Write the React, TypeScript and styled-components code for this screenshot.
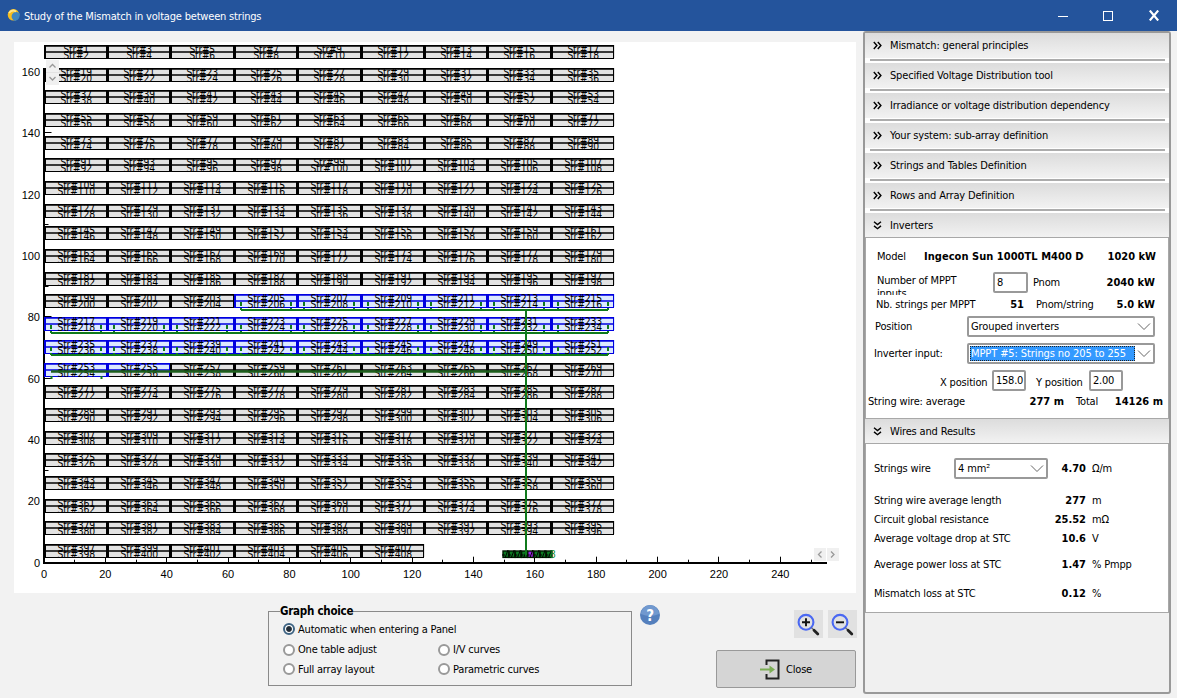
import React from 'react';
import styled, { createGlobalStyle, css } from 'styled-components';

const Global = createGlobalStyle`
  * { box-sizing: border-box; }
  body {
    margin: 0;
    background: #f2f2f2;
    font-family: "DejaVu Sans Condensed", "DejaVu Sans", sans-serif;
    font-stretch: condensed;
    font-size: 11px;
    letter-spacing: -0.2px;
    color: #000;
  }
`;

const Window = styled.div`
  width: 1177px;
  height: 698px;
  display: flex;
  flex-direction: column;
  background: #f2f2f2;
  overflow: hidden;
`;

const TitleBar = styled.header`
  height: 31px;
  flex: none;
  display: flex;
  align-items: center;
  padding: 0 17px 0 7px;
  background: #24549c;
  color: #fff;
`;

const Title = styled.h1`
  flex: 1;
  margin: 1px 0 0 3px;
  font-size: 11px;
  font-weight: 400;
  letter-spacing: -0.19px;
  white-space: nowrap;
`;

const Controls = styled.div`
  display: flex;
  align-items: center;
  gap: 35px;
`;

const Body = styled.main`
  flex: 1;
  display: flex;
  min-height: 0;
`;

const Left = styled.section`
  width: 863px;
  display: flex;
  flex-direction: column;
  padding: 11px 0 0 14px;
`;

const ChartBox = styled.div`
  width: 842px;
  height: 551px;
  background: #fff;
  svg { display: block; }
`;

const Footer = styled.div`
  display: flex;
  padding: 11px 0 0 254px;
`;

const Group = styled.fieldset`
  width: 364px;
  height: 82px;
  margin: 0;
  padding: 0 0 0 14px;
  border: 1px solid #8a8a8a;
`;

const Legend = styled.legend`
  margin-left: -3px;
  padding: 0;
  height: 15px;
  line-height: 15px;
  font-weight: 700;
  font-size: 11.5px;
  letter-spacing: -0.25px;
`;

const Options = styled.div`
  display: grid;
  grid-template-columns: 155px 180px;
  grid-template-rows: 20px 21px 18px;
`;

const Option = styled.label<{ $wide?: boolean }>`
  display: flex;
  align-items: center;
  gap: 3px;
  white-space: nowrap;
  ${(p) => p.$wide && css`grid-column: 1 / 3;`}
`;

const Radio = styled.span<{ $on?: boolean }>`
  width: 12px;
  height: 12px;
  border-radius: 50%;
  border: ${(p) => (p.$on ? '2px solid #3f6483' : '2px solid #999')};
  background: ${(p) => (p.$on ? 'radial-gradient(circle, #222c36 0 2.4px, #fff 3.4px)' : '#fff')};
`;

const Help = styled.div`
  margin: 1px 0 0 8px;
  width: 20px;
  height: 20px;
`;

const Actions = styled.div`
  margin-left: 56px;
  padding-top: 6px;
  width: 141px;
  display: flex;
  flex-direction: column;
  align-items: flex-end;
  gap: 12px;
`;

const ZoomButtons = styled.div`
  display: flex;
  gap: 5px;
`;

const ZoomButton = styled.button`
  width: 29px;
  height: 28px;
  padding: 0;
  border: 0;
  background: #e1e1e1;
  svg { display: block; }
`;

const CloseButton = styled.button`
  width: 140px;
  height: 38px;
  margin-right: 1px;
  padding: 0;
  display: flex;
  align-items: center;
  justify-content: center;
  gap: 5px;
  border: 1.5px solid #999;
  border-radius: 2px;
  background: #d5d5d5;
  color: #000;
  font: inherit;
  letter-spacing: inherit;
`;

const Side = styled.aside`
  width: 308px;
  height: 663px;
  display: flex;
  flex-direction: column;
  border: 2px solid #999;
  border-radius: 3px;
  background: #f0f0f0;
`;

const Closed = styled.div`
  height: 30px;
  flex: none;
  padding-bottom: 5px;
  background: #fff linear-gradient(#acacac, #acacac) 5px 26px / 295px 2px no-repeat;
`;

const Head = styled.div<{ $h: number }>`
  height: ${(p) => p.$h}px;
  flex: none;
  display: flex;
  align-items: center;
  gap: 8px;
  padding-left: 8px;
  letter-spacing: -0.16px;
  background: linear-gradient(#dcdcdc, #f2f2f2);
`;

const Panel = styled.div<{ $h: number }>`
  height: ${(p) => p.$h}px;
  flex: none;
  background: #fff;
  border: 1px solid #a8a8a8;
`;

const Row = styled.div<{ $cols: string; $mt: number }>`
  display: grid;
  grid-template-columns: ${(p) => p.$cols};
  align-items: center;
  height: 20px;
  margin-top: ${(p) => p.$mt}px;
  white-space: nowrap;
`;

const Label = styled.span<{ $col?: number; $dy?: number }>`
  grid-column: ${(p) => p.$col ?? 2};
  letter-spacing: -0.17px;
  padding-top: ${(p) => p.$dy ?? 0}px;
`;

const WrapLabel = styled.span`
  grid-column: 2;
  align-self: start;
  width: 100px;
  height: 21px;
  margin-top: 4px;
  line-height: 13px;
  white-space: normal;
  overflow: hidden;
`;

const Value = styled.strong<{ $col: number; $clip?: boolean }>`
  grid-column: ${(p) => p.$col};
  text-align: ${(p) => (p.$clip ? 'left' : 'right')};
  overflow: hidden;
  letter-spacing: ${(p) => (p.$clip ? '0.04px' : '0')};
`;

const Input = styled.span<{ $col: number }>`
  grid-column: ${(p) => p.$col};
  height: 21px;
  padding-left: 2px;
  line-height: 17px;
  border: 2px solid #999;
  border-radius: 2px;
  background: #fff;
  overflow: hidden;
  letter-spacing: -0.25px;
`;

const Select = styled.span`
  grid-column: 3;
  height: 21px;
  display: flex;
  align-items: center;
  justify-content: space-between;
  padding: 0 2px 0 1px;
  border: 2px solid #999;
  border-radius: 2px;
  background: #fff;
`;

const Chosen = styled.span<{ $active?: boolean }>`
  height: 15px;
  line-height: 15px;
  padding-left: 1px;
  letter-spacing: -0.1px;
  ${(p) => p.$active && css`
    width: 165px;
    background: #3399ff;
    color: #fff;
    outline: 1px dotted #222;
    outline-offset: -1px;
  `}
`;

const Chevron = () => (
  <svg width="14" height="9" viewBox="0 0 14 9" fill="none" stroke="#666">
    <path d="M1 1.5 L7 7.5 L13 1.5" />
  </svg>
);

const HeadIcon = ({ open }: { open?: boolean }) => (
  <svg width="9" height="9" viewBox="0 0 9 9" fill="none" stroke="#000" strokeWidth="1.4">
    {open ? <path d="M1 .8 L4.5 3.6 L8 .8 M1 4.9 L4.5 7.7 L8 4.9" /> : <path d="M.8 1 L3.9 4.5 L.8 8 M4.8 1 L7.9 4.5 L4.8 8" />}
  </svg>
);

const X0 = 30.5;
const Y0 = 520.7;
const UNIT = 3.068;
const ROW_PITCH = 22.68;
const COL_PITCH = 63.4;
const BLUE = '#0000e0';
const GREEN = '#107a1c';

const Table = ({ row, col }: { row: number; col: number }) => {
  const x = Math.round(X0 + col * COL_PITCH);
  const w = Math.round(X0 + (col + 1) * COL_PITCH) - x;
  const y = Math.round(3 + row * ROW_PITCH);
  const n = row * 18 + col * 2 + 1;
  const on = n >= 205 && n <= 255;
  const partial = n === 255;
  const stroke = on ? BLUE : '#000';
  const lower = on && !partial ? BLUE : '#000';
  const label = (k: number, ty: number) => (
    <text
      x={x + 31.2}
      y={ty}
      textAnchor="middle"
      textLength={19.5 + String(k).length * 6}
      lengthAdjust="spacingAndGlyphs"
    >
      {`Str#${k}`}
    </text>
  );
  return (
    <g>
      <rect x={x} y={y} width={w} height={13} fill={lower === BLUE ? '#dce8ff' : '#e3e3e3'} />
      {partial && <rect x={x} y={y} width={w} height={7} fill="#dce8ff" />}
      <path d={`M${x - 1} ${y + 0.9} h${w}`} stroke={stroke} strokeWidth="1.8" />
      <path d={`M${x - 1} ${y + 7} h${w}`} stroke={stroke} strokeWidth="1.5" />
      <path d={`M${x - 1} ${y + 13.5} h${w}`} stroke={lower} strokeWidth="1" />
      <path d={`M${x} ${y} v14`} stroke={stroke} strokeWidth="2" />
      <path d={`M${x + w - 1.5} ${y} v14`} stroke={stroke} strokeWidth="1" />
      <svg x={x} y={y} width={w} height={14} viewBox={`${x} ${y} ${w} 14`}>
        {label(n, y + 8)}
        {label(n + 1, y + 14)}
      </svg>
    </g>
  );
};

const tables: { row: number; col: number }[] = [];
for (let row = 0; row < 23; row += 1) {
  for (let col = 0; col < (row === 22 ? 6 : 9); col += 1) tables.push({ row, col });
}

const connectors = [
  { row: 11, from: 3, to: 8, y: 268 },
  { row: 12, from: 0, to: 8, y: 291 },
  { row: 13, from: 0, to: 8, y: 313 },
];

const Arrow = ({ d }: { d: string }) => <path d={d} fill="none" stroke="#999" strokeWidth="1.3" />;

const Chart = () => (
  <ChartBox>
    <svg width="842" height="551" viewBox="0 0 842 551" fontFamily="Liberation Sans, sans-serif" fontSize="11">
      <path d="M30 26 V521 H813" fill="none" stroke="#000" strokeWidth="2" />
      {Array.from({ length: 26 }, (_, i) => (
        <path key={i} d={`M${Math.round(X0 + i * 10 * UNIT) - 0.5} ${Y0} v${i % 2 ? -3 : -6}`} stroke="#000" />
      ))}
      {Array.from({ length: 17 }, (_, i) => (
        <path key={i} d={`M${X0} ${Math.round(Y0 - i * 10 * UNIT) - 0.5} h${i % 2 ? 4 : 7}`} stroke="#000" />
      ))}
      <g letterSpacing="0">
        {Array.from({ length: 13 }, (_, i) => (
          <text key={i} x={X0 + i * 20 * UNIT - 0.5} y="536" textAnchor="middle">{i * 20}</text>
        ))}
        {Array.from({ length: 9 }, (_, i) => (
          <text key={i} x="26" y={Y0 - i * 20 * UNIT + 4} textAnchor="end">{i * 20}</text>
        ))}
      </g>
      <g fontFamily="DejaVu Sans Condensed, DejaVu Sans, sans-serif" fontSize="11">
        {tables.map((t) => <Table key={`${t.row}-${t.col}`} {...t} />)}
      </g>
      {connectors.map((c) => (
        <g key={c.row} stroke={GREEN} shapeRendering="crispEdges">
          <path d={`M${Math.round(X0 + c.from * COL_PITCH) + 6} ${c.y} H594`} strokeWidth="2" />
          {Array.from({ length: c.to - c.from + 1 }, (_, i) => {
            const x = Math.round(X0 + (c.from + i) * COL_PITCH);
            return (
              <path
                key={i}
                d={`M${x + 6} ${c.y - 8} v8 M${x + 56} ${c.y - 8} v8`}
                strokeWidth="2"
                strokeDasharray="4 2"
              />
            );
          })}
        </g>
      ))}
      <path d="M37 329.5 H513" stroke="#1c5f1c" strokeWidth="2.4" />
      <path d="M37.5 334 v3 M87.5 334 v3" stroke={GREEN} strokeWidth="2" />
      <g>
        {Array.from({ length: 8 }, (_, i) => (
          <g key={i}>
            <rect x={489 + i * 6.2} y="509" width="5.6" height="6.4" fill={i === 4 ? '#a020f0' : '#0c7a22'} stroke="#001800" strokeWidth="1.4" />
            <path d={`M${488 + i * 6.2} 513 h3 M${491 + i * 6.2} 516 l3 -8`} stroke="#000" strokeWidth="1" />
          </g>
        ))}
        <text x="536" y="516" fontSize="10" fill="#0c8a2a">8</text>
      </g>
      <path d="M512 268 V513" stroke={GREEN} strokeWidth="2" />
      <rect x="32" y="18" width="13" height="12" fill="#f0f0f0" />
      <rect x="32" y="31" width="13" height="12" fill="#f0f0f0" />
      <Arrow d="M35.5 25.5 l3 -3 l3 3" />
      <Arrow d="M35.5 35 l3 3 l3 -3" />
      <rect x="800" y="506" width="12" height="13" fill="#f0f0f0" />
      <rect x="813" y="506" width="12" height="13" fill="#f0f0f0" />
      <Arrow d="M807.5 509.5 l-3 3 l3 3" />
      <Arrow d="M817 509.5 l3 3 l-3 3" />
    </svg>
  </ChartBox>
);

const ZoomIcon = ({ plus }: { plus?: boolean }) => (
  <svg width="29" height="28" viewBox="0 0 29 28" fill="none">
    <circle cx="12" cy="12.3" r="7.4" stroke="#4a68f2" strokeWidth="2.1" />
    <path d={plus ? 'M8 12.3 H16 M12 8.3 V16.3' : 'M8 12.3 H16'} stroke="#111" strokeWidth="1.9" />
    <path d="M17.4 17.6 L20.2 20.3" stroke="#666" strokeWidth="1.2" />
    <path d="M20 20.2 L23.8 24" stroke="#222" strokeWidth="2.8" strokeLinecap="round" />
  </svg>
);

const closedSections = [
  'Mismatch: general principles',
  'Specified Voltage Distribution tool',
  'Irradiance or voltage distribution dependency',
  'Your system: sub-array definition',
  'Strings and Tables Definition',
  'Rows and Array Definition',
];

const results = [
  { name: 'String wire average length', value: '277', unit: 'm', gap: 12 },
  { name: 'Circuit global resistance', value: '25.52', unit: 'mΩ', gap: -1 },
  { name: 'Average voltage drop at STC', value: '10.6', unit: 'V', gap: -1 },
  { name: 'Average power loss at STC', value: '1.47', unit: '% Pmpp', gap: 6 },
  { name: 'Mismatch loss at STC', value: '0.12', unit: '%', gap: 9 },
];

export default function App() {
  return (
    <>
      <Global />
      <Window>
        <TitleBar>
          <svg width="14" height="14" viewBox="0 0 14 14">
            <circle cx="6.5" cy="5.8" r="5.8" fill="#f5bd20" />
            <path d="M12.8 4.6 A4.6 4.6 0 1 0 8.2 12 Q13 11 12.8 4.6" fill="#3f86c0" />
            <path d="M2 4 Q5 0 9 2.5" stroke="#ffe68a" strokeWidth="1.8" fill="none" />
          </svg>
          <Title>Study of the Mismatch in voltage between strings</Title>
          <Controls>
            <svg width="10" height="10" viewBox="0 0 10 10"><path d="M0 5.5 H10" stroke="#fff" /></svg>
            <svg width="10" height="10" viewBox="0 0 10 10"><rect x=".5" y=".5" width="9" height="9" fill="none" stroke="#fff" /></svg>
            <svg width="12" height="11" viewBox="0 0 12 11"><path d="M1.8 .5 L10.2 10.5 M10.2 .5 L1.8 10.5" stroke="#fff" strokeWidth="2.1" /></svg>
          </Controls>
        </TitleBar>
        <Body>
          <Left>
            <Chart />
            <Footer>
              <Group>
                <Legend>Graph choice</Legend>
                <Options>
                  <Option $wide><Radio $on />Automatic when entering a Panel</Option>
                  <Option><Radio />One table adjust</Option>
                  <Option><Radio />I/V curves</Option>
                  <Option><Radio />Full array layout</Option>
                  <Option><Radio />Parametric curves</Option>
                </Options>
              </Group>
              <Help>
                <svg width="20" height="20" viewBox="0 0 20 20">
                  <circle cx="10" cy="10" r="10" fill="#5580bd" />
                  <path d="M1 9 A9 9 0 0 1 19 9 Q10 13 1 9" fill="#7199cf" />
                  <text x="10" y="15.5" textAnchor="middle" fontSize="15" fontWeight="700" fill="#fff">?</text>
                </svg>
              </Help>
              <Actions>
                <ZoomButtons>
                  <ZoomButton><ZoomIcon plus /></ZoomButton>
                  <ZoomButton><ZoomIcon /></ZoomButton>
                </ZoomButtons>
                <CloseButton>
                  <svg width="21" height="21" viewBox="0 0 21 21" fill="none">
                    <path d="M6.5 6 V1.5 H18.5 V19.5 H6.5 V15" stroke="#222" strokeWidth="2" />
                    <path d="M0 10.5 H11" stroke="#7cae55" strokeWidth="2" />
                    <path d="M9.5 6.5 L15 10.5 L9.5 14.5 Z" fill="#7cae55" />
                  </svg>
                  Close
                </CloseButton>
              </Actions>
            </Footer>
          </Left>
          <Side>
            {closedSections.map((name) => (
              <Closed key={name}>
                <Head $h={25}><HeadIcon />{name}</Head>
              </Closed>
            ))}
            <Head $h={24}><HeadIcon open />Inverters</Head>
            <Panel $h={182}>
              <Row $mt={8} $cols="11px 47px 160px 72px">
                <Label>Model</Label>
                <Value $col={3} $clip>Ingecon Sun 1000TL M400 DC</Value>
                <Value $col={4}>1020 kW</Value>
              </Row>
              <Row $mt={4} $cols="11px 116px 35px 5px 50px 72px">
                <WrapLabel>Number of MPPT inputs</WrapLabel>
                <Input $col={3}>8</Input>
                <Label $col={5}>Pnom</Label>
                <Value $col={6}>2040 kW</Value>
              </Row>
              <Row $mt={4} $cols="10px 108px 40px 12px 70px 49px">
                <Label>Nb. strings per MPPT</Label>
                <Value $col={3}>51</Value>
                <Label $col={5}>Pnom/string</Label>
                <Value $col={6}>5.0 kW</Value>
              </Row>
              <Row $mt={2} $cols="9px 92px 188px">
                <Label>Position</Label>
                <Select><Chosen>Grouped inverters</Chosen><Chevron /></Select>
              </Row>
              <Row $mt={7} $cols="8px 93px 188px">
                <Label>Inverter input:</Label>
                <Select><Chosen $active>MPPT #5: Strings no 205 to 255</Chosen><Chevron /></Select>
              </Row>
              <Row $mt={7} $cols="74px 52px 34px 10px 53px 34px">
                <Label $dy={3}>X position</Label>
                <Input $col={3}>158.0</Input>
                <Label $col={5} $dy={3}>Y position</Label>
                <Input $col={6}>2.00</Input>
              </Row>
              <Row $mt={1} $cols="2px 120px 76px 12px 35px 52px">
                <Label>String wire: average</Label>
                <Value $col={3}>277 m</Value>
                <Label $col={5}>Total</Label>
                <Value $col={6}>14126 m</Value>
              </Row>
            </Panel>
            <Head $h={24}><HeadIcon open />Wires and Results</Head>
            <Panel $h={170}>
              <Row $mt={14} $cols="8px 80px 94px 38px 6px 60px">
                <Label>Strings wire</Label>
                <Select><Chosen>4 mm²</Chosen><Chevron /></Select>
                <Value $col={4}>4.70</Value>
                <Label $col={6}>Ω/m</Label>
              </Row>
              {results.map((r) => (
                <Row key={r.name} $mt={r.gap} $cols="8px 162px 50px 6px 60px">
                  <Label>{r.name}</Label>
                  <Value $col={3}>{r.value}</Value>
                  <Label $col={5}>{r.unit}</Label>
                </Row>
              ))}
            </Panel>
          </Side>
        </Body>
      </Window>
    </>
  );
}
